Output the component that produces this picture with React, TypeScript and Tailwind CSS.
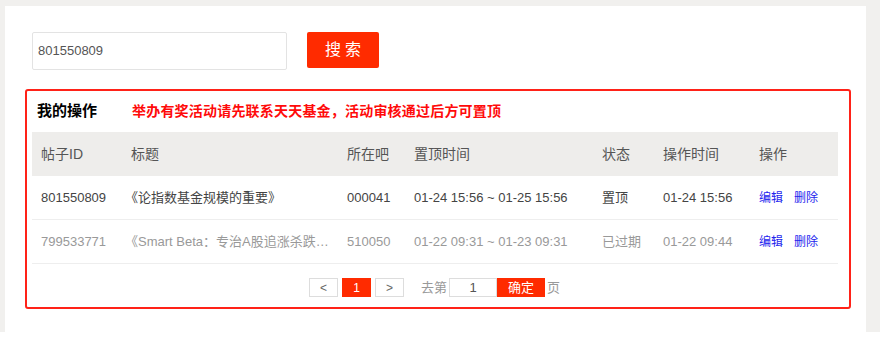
import React from "react";

const FONT = {
    fontFamily: '"Liberation Sans", Arial, "Noto Sans CJK SC", sans-serif',
};

const COLS = "grid grid-cols-[90px_216px_67px_188px_61px_96px_88px]";

type Row = {
    id: string;
    title: string;
    bar: string;
    range: string;
    status: string;
    time: string;
    expired?: boolean;
};

const rows: Row[] = [
    {
        id: "801550809",
        title: "《论指数基金规模的重要》",
        bar: "000041",
        range: "01-24 15:56 ~ 01-25 15:56",
        status: "置顶",
        time: "01-24 15:56",
    },
    {
        id: "799533771",
        title: "《Smart Beta：专治A股追涨杀跌…",
        bar: "510050",
        range: "01-22 09:31 ~ 01-23 09:31",
        status: "已过期",
        time: "01-22 09:44",
        expired: true,
    },
];

const headers = ["帖子ID", "标题", "所在吧", "置顶时间", "状态", "操作时间", "操作"];

export default function App() {
    return (
        <div className="min-h-screen bg-white" style={FONT}>
            <div className="w-[880px] h-[332px] bg-[#f1f0ee] pl-[5px] pt-[6px] pr-[14px]">
                <div className="h-full bg-white pl-[20px] pt-[26px]">

                    {/* search */}
                    <div className="ml-[7px] flex items-start gap-[20px]">
                        <div className="w-[255px] h-[38px] border border-[#e3e3e3] rounded-[2px] flex items-center pl-[5px] text-[13px] text-[#555]">
                            801550809
                        </div>
                        <button className="w-[72px] h-[36px] bg-[#ff2b00] rounded-[2px] text-white text-[16px] tracking-[4px] pl-[4px] flex items-center justify-center">
                            搜索
                        </button>
                    </div>

                    {/* my operations */}
                    <div className="mt-[19px] w-[826px] h-[220px] border-2 border-[#ff2218] rounded-[3px]">
                        <div className="h-[41px] flex items-center pl-[10px]">
                            <span className="w-[95px] text-[15px] font-bold text-black">
                                我的操作
                            </span>
                            <span className="text-[14px] font-bold text-[#ff0a0a] tracking-[0.2px]">
                                举办有奖活动请先联系天天基金，活动审核通过后方可置顶
                            </span>
                        </div>

                        <div className="ml-[5px] w-[806px]">
                            <div className={`${COLS} h-[44px] items-center bg-[#eeedeb] text-[14px] text-[#555]`}>
                                {headers.map((h) => (
                                    <div key={h} className="pl-[9px]">
                                        {h}
                                    </div>
                                ))}
                            </div>

                            {rows.map((r) => (
                                <div
                                    key={r.id}
                                    className={`${COLS} h-[44px] items-center border-b border-[#eeeeee] text-[13px] ${
                                        r.expired ? "text-[#999]" : "text-[#444]"
                                    }`}
                                >
                                    <div className="pl-[9px]">{r.id}</div>
                                    <div className="pl-[3px] whitespace-nowrap overflow-hidden">{r.title}</div>
                                    <div className="pl-[9px]">{r.bar}</div>
                                    <div className="pl-[9px] whitespace-nowrap">{r.range}</div>
                                    <div className="pl-[9px]">{r.status}</div>
                                    <div className="pl-[9px]">{r.time}</div>
                                    <div className="pl-[9px] flex gap-[11px] text-[12px] text-[#2424ee]">
                                        <span>编辑</span>
                                        <span>删除</span>
                                    </div>
                                </div>
                            ))}
                        </div>

                        {/* pager */}
                        <div className="mt-[14px] flex items-center pl-[282px] text-[12px]">
                            <span className="w-[29px] h-[19px] border border-[#ddd] flex items-center justify-center text-[#666]">
                                &lt;
                            </span>
                            <span className="ml-[4px] w-[29px] h-[19px] bg-[#ff2b00] flex items-center justify-center text-white">
                                1
                            </span>
                            <span className="ml-[4px] w-[29px] h-[19px] border border-[#ddd] flex items-center justify-center text-[#666]">
                                &gt;
                            </span>
                            <span className="ml-[17px] text-[13px] text-[#999]">去第</span>
                            <span className="ml-[2px] w-[48px] h-[19px] border border-[#ddd] flex items-center justify-center text-[13px] text-[#555]">
                                1
                            </span>
                            <span className="w-[48px] h-[19px] bg-[#ff2b00] flex items-center justify-center text-[13px] text-white">
                                确定
                            </span>
                            <span className="ml-[2px] text-[13px] text-[#999]">页</span>
                        </div>
                    </div>

                </div>
            </div>
        </div>
    );
}
